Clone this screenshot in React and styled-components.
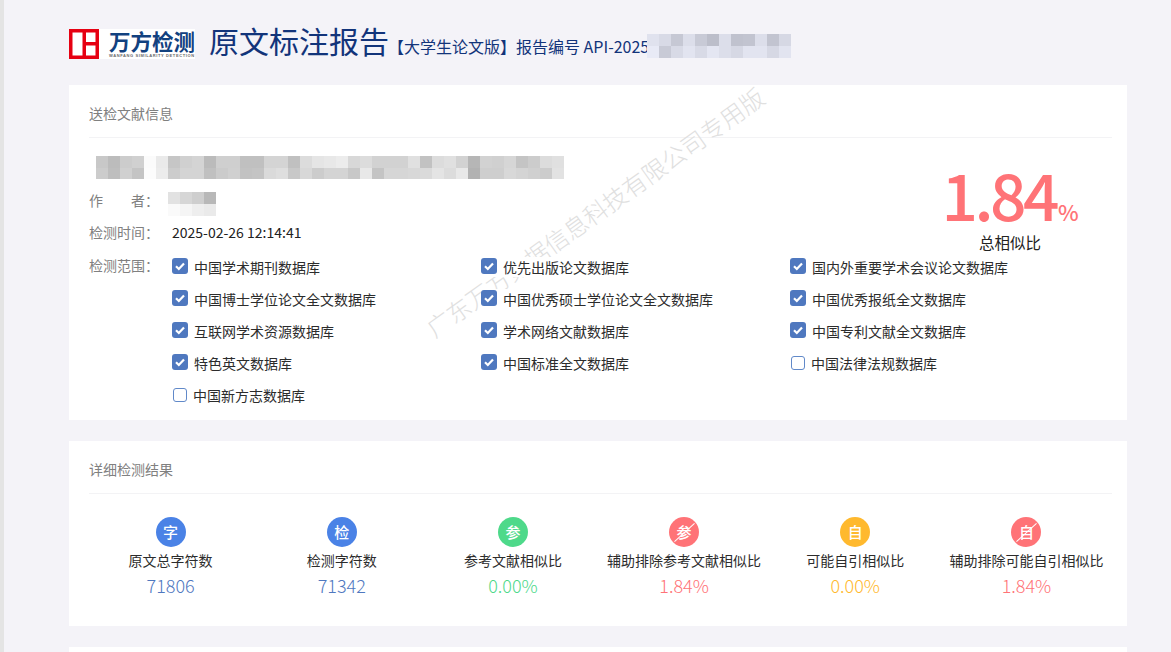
import React from "react";
import styled, { createGlobalStyle } from "styled-components";

const Global = createGlobalStyle`
  html, body { margin: 0; padding: 0; height: 652px; overflow: hidden; background: #f4f3f8; }
  body { font-family: "Noto Sans CJK SC", "Noto Sans", sans-serif; color: #222; }
  * { box-sizing: border-box; }
`;

const Page = styled.div`
  height: 652px;
  overflow: hidden;
  border-left: 4px solid #e4e4e4;
  padding: 29px 44px 0 65px;
  position: relative;
`;

const Header = styled.header`
  display: flex;
  align-items: center;
  height: 30px;
  margin-bottom: 26px;
`;

const Logo = styled.div`
  width: 126px;
  height: 30px;
  background: #fff;
  display: flex;
  flex: none;
`;

const LogoWords = styled.div`
  margin-left: 10px;
  display: flex;
  flex-direction: column;
  align-items: flex-start;
  height: 30px;
`;

const LogoName = styled.div`
  font-size: 21.5px;
  line-height: 24px;
  font-weight: 700;
  color: #12417f;
  white-space: nowrap;
`;

const LogoTag = styled.div`
  font-family: "Liberation Sans", sans-serif;
  font-size: 4px;
  line-height: 5px;
  font-weight: 700;
  letter-spacing: 0.62px;
  color: #6a6a6a;
  white-space: nowrap;
`;

const Title = styled.h1`
  margin: 0 0 0 14px;
  font-size: 30px;
  line-height: 30px;
  font-weight: 400;
  color: #12347a;
  white-space: nowrap;
  position: relative;
  top: -4px;
`;

const Sub = styled.div`
  position: relative;
  margin-left: -1px;
  font-size: 16px;
  line-height: 24px;
  color: #12347a;
  white-space: nowrap;
  top: 2px;
`;

const MosaicGrid = styled.div`
  display: grid;
  grid-template-columns: repeat(${(p) => p.$cols}, 12px);
  grid-auto-rows: ${(p) => p.$row}px;
  width: max-content;
`;

const SubMosaic = styled(MosaicGrid)`
  position: absolute;
  left: 259px;
  top: 0;
`;

const AuthorMosaic = styled(MosaicGrid)`
  margin-left: -4px;
`;

const Card = styled.section`
  background: #fff;
  margin-bottom: 21px;
  position: relative;
  height: ${(p) => p.$h}px;
  padding: 0 15px 0 20px;
`;

const CardTitle = styled.div`
  height: 53px;
  font-size: 14px;
  line-height: 20px;
  padding-top: 18px;
  color: #808080;
  border-bottom: 1px solid #f3f3f5;
`;

const InfoBody = styled.div`
  display: flex;
  padding-top: 18px;
`;

const InfoMain = styled.div`
  flex: 1;
  min-width: 0;
`;

const DocName = styled(MosaicGrid)`
  margin-left: 7px;
  margin-bottom: 13px;
`;

const Field = styled.div`
  display: flex;
  align-items: ${(p) => (p.$top ? "flex-start" : "center")};
  min-height: ${(p) => p.$h || 24}px;
  margin-bottom: ${(p) => p.$mb || 0}px;
`;

const Label = styled.div`
  width: 83px;
  flex: none;
  font-size: 14px;
  line-height: 20px;
  color: #808080;
  white-space: pre;
  margin-top: ${(p) => (p.$lift ? -8 : 0)}px;
`;

const Value = styled.div`
  font-size: 14px;
  line-height: 20px;
  color: #222;
`;

const Ranges = styled.div`
  display: grid;
  grid-template-columns: repeat(3, 309px);
  grid-auto-rows: 32px;
`;

const RangeItem = styled.label`
  display: flex;
  align-items: center;
  position: relative;
  z-index: 1;
  width: max-content;
  height: 20px;
  margin-top: 2px;
  gap: 6px;
  background: #fff;
  font-size: 14px;
  color: #2c2c2c;
  white-space: nowrap;
`;

const Box = styled.span`
  width: ${(p) => (p.$on ? 16 : 14)}px;
  height: ${(p) => (p.$on ? 16 : 14)}px;
  margin-left: ${(p) => (p.$on ? 0 : 1)}px;
  position: relative;
  top: ${(p) => (p.$on ? -1 : 0)}px;
  flex: none;
  border-radius: 3px;
  background: ${(p) => (p.$on ? "#4f78bf" : "#fff")};
  border: ${(p) => (p.$on ? "none" : "1.5px solid #6189c9")};
  display: flex;
  align-items: center;
  justify-content: center;
`;

const Total = styled.div`
  width: 200px;
  flex: none;
  margin-right: 2px;
  text-align: center;
  position: relative;
`;

const TotalNum = styled.div`
  color: #ff7377;
  font-size: 64px;
  line-height: 50px;
  font-weight: 500;
  white-space: nowrap;
  margin-top: 12px;
  letter-spacing: -3.5px;
`;

const TotalUnit = styled.span`
  font-size: 22px;
  line-height: 1;
  letter-spacing: 0;
  margin-left: 2px;
`;

const TotalLabel = styled.div`
  font-size: 15.5px;
  line-height: 20px;
  color: #222;
  margin-top: 10px;
`;

const Stats = styled.div`
  display: grid;
  grid-template-columns: repeat(6, 1fr);
  margin-left: -4px;
  padding-top: 23px;
`;

const Stat = styled.div`
  display: flex;
  flex-direction: column;
  align-items: center;
`;

const Badge = styled.div`
  width: 30px;
  height: 30px;
  border-radius: 50%;
  background: ${(p) => p.$c};
  color: #fff;
  font-size: 15px;
  font-weight: 500;
  line-height: 29px;
  text-align: center;
  position: relative;
  overflow: hidden;
  ${(p) =>
    p.$strike &&
    `&::after {
      content: "";
      position: absolute;
      left: 2px;
      top: 15px;
      width: 27px;
      height: 1px;
      background: #fff;
      transform: rotate(-42deg);
    }`}
`;

const StatLabel = styled.div`
  margin-top: 3px;
  font-size: 14px;
  line-height: 20px;
  color: #2c2c2c;
  white-space: nowrap;
`;

const StatValue = styled.div`
  margin-top: 2px;
  font-size: 18px;
  line-height: 26px;
  font-weight: 300;
  color: ${(p) => p.$c};
`;

const Watermark = styled.div`
  position: absolute;
  z-index: 0;
  left: 321px;
  top: 115px;
  width: 410px;
  font-size: 24px;
  line-height: 24px;
  font-weight: 300;
  text-align: center;
  color: #e0e0e0;
  white-space: nowrap;
  transform: rotate(-35.5deg);
  pointer-events: none;
`;

const Check = () => (
  <svg width="12" height="12" viewBox="0 0 12 12" aria-hidden="true">
    <path d="M2 6.3 4.8 9 10 3.4" fill="none" stroke="#fff" strokeWidth="2.2" />
  </svg>
);

const LogoMark = () => (
  <svg width="30" height="30" viewBox="0 0 30 30" aria-hidden="true">
    <rect width="30" height="30" fill="#e60012" />
    <rect x="3.5" y="3.5" width="10" height="23" fill="#fff" />
    <rect x="17" y="3.5" width="9.5" height="9.5" fill="#fff" />
    <rect x="17" y="16.5" width="9.5" height="10" fill="#fff" />
  </svg>
);

const Mosaic = ({ as: Comp = MosaicGrid, cols, row, cells, tint }) => (
  <Comp $cols={cols} $row={row}>
    {cells.map((v, i) => (
      <div key={i} style={{ background: tint ? `rgb(${v},${v + 2},${v + 14})` : `rgb(${v},${v},${v})` }} />
    ))}
  </Comp>
);

const nameCells = [
  200, 188, 204, 208, 251, 234, 198, 208, 212, 187, 207, 207, 192, 192, 212, 212, 192, 220, 229, 232, 236, 216, 220, 210, 210, 210, 224, 194, 220, 224, 210, 182, 210, 208, 214, 196, 204, 220, 224,
  204, 190, 208, 196, 252, 236, 204, 212, 212, 192, 203, 208, 194, 196, 218, 222, 200, 216, 204, 212, 212, 200, 232, 196, 214, 214, 216, 218, 228, 220, 232, 178, 206, 206, 216, 212, 208, 204, 226,
];
const authorCells = [226, 214, 206, 184, 250, 245, 238, 234];
const subCells = [
  224, 216, 198, 220, 200, 188, 220, 192, 194, 220, 194, 214,
  232, 200, 216, 226, 216, 228, 220, 214, 226, 226, 214, 226,
];

const Ranged = [
  ["中国学术期刊数据库", true], ["优先出版论文数据库", true], ["国内外重要学术会议论文数据库", true],
  ["中国博士学位论文全文数据库", true], ["中国优秀硕士学位论文全文数据库", true], ["中国优秀报纸全文数据库", true],
  ["互联网学术资源数据库", true], ["学术网络文献数据库", true], ["中国专利文献全文数据库", true],
  ["特色英文数据库", true], ["中国标准全文数据库", true], ["中国法律法规数据库", false],
  ["中国新方志数据库", false],
];

const BLUE = "#4a82e6";
const GREEN = "#4ed98a";
const RED = "#ff7377";
const AMBER = "#ffb92e";
const StatsData = [
  { g: "字", bg: BLUE, label: "原文总字符数", value: "71806", c: "#4f78bf" },
  { g: "检", bg: BLUE, label: "检测字符数", value: "71342", c: "#4f78bf" },
  { g: "参", bg: GREEN, label: "参考文献相似比", value: "0.00%", c: GREEN },
  { g: "参", bg: RED, strike: true, label: "辅助排除参考文献相似比", value: "1.84%", c: RED },
  { g: "自", bg: AMBER, label: "可能自引相似比", value: "0.00%", c: AMBER },
  { g: "自", bg: RED, strike: true, label: "辅助排除可能自引相似比", value: "1.84%", c: RED },
];

export default function App() {
  return (
    <Page>
      <Global />
      <Header>
        <Logo>
          <LogoMark />
          <LogoWords>
            <LogoName>万方检测</LogoName>
            <LogoTag>WANFANG SIMILARITY DETECTION</LogoTag>
          </LogoWords>
        </Logo>
        <Title>原文标注报告</Title>
        <Sub>
          【大学生论文版】报告编号 API-20250
          <Mosaic as={SubMosaic} cols={12} row={12} cells={subCells} tint />
        </Sub>
      </Header>

      <Card $h={335}>
        <CardTitle>送检文献信息</CardTitle>
        <InfoBody>
          <InfoMain>
            <Mosaic as={DocName} cols={39} row={11.5} cells={nameCells} />
            <Field $h={24} $mb={4}>
              <Label $lift>作　　者：</Label>
              <Mosaic as={AuthorMosaic} cols={4} row={12} cells={authorCells} />
            </Field>
            <Field $h={24} $mb={11}>
              <Label>检测时间：</Label>
              <Value>2025-02-26 12:14:41</Value>
            </Field>
            <Field $top>
              <Label>检测范围：</Label>
              <Ranges>
                {Ranged.map(([name, on]) => (
                  <RangeItem key={name} $on={on}>
                    <Box $on={on}>{on && <Check />}</Box>
                    {name}
                  </RangeItem>
                ))}
              </Ranges>
            </Field>
          </InfoMain>
          <Total>
            <TotalNum>
              1.84<TotalUnit>%</TotalUnit>
            </TotalNum>
            <TotalLabel>总相似比</TotalLabel>
          </Total>
        </InfoBody>
        <Watermark>广东万方数据信息科技有限公司专用版</Watermark>
      </Card>

      <Card $h={185}>
        <CardTitle>详细检测结果</CardTitle>
        <Stats>
          {StatsData.map((s) => (
            <Stat key={s.label}>
              <Badge $c={s.bg} $strike={s.strike}>{s.g}</Badge>
              <StatLabel>{s.label}</StatLabel>
              <StatValue $c={s.c}>{s.value}</StatValue>
            </Stat>
          ))}
        </Stats>
      </Card>

      <Card $h={100} />
    </Page>
  );
}
